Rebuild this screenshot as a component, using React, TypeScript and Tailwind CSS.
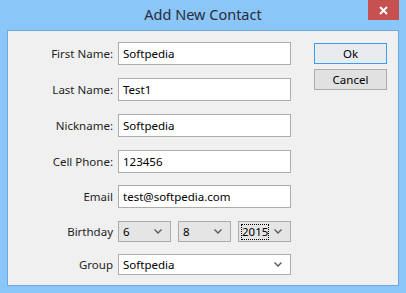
import React from "react";

const FONT = { fontFamily: '"Segoe UI", "Noto Sans", "Open Sans", sans-serif' };

function Chevron() {
  return (
    <svg width="8" height="5" viewBox="0 0 8 5" className="shrink-0">
      <path d="M0.5 0.5L4 4L7.5 0.5" fill="none" stroke="#5a5a5a" strokeWidth="1.4" />
    </svg>
  );
}

function Label({ text }: { text: string }) {
  return <div className="w-[110px] shrink-0 pr-[5px] text-right text-[11.5px] text-[#1e1e1e]">{text}</div>;
}

function TextBox({ value }: { value: string }) {
  return (
    <div className="w-[173px] h-[23px] shrink-0 border border-[#acacac] bg-white px-[4px] flex items-center text-[11.5px] text-black">
      {value}
    </div>
  );
}

function Combo({ value, width, white, focused }: { value: string; width: string; white?: boolean; focused?: boolean }) {
  return (
    <div
      className={`${width} h-[21px] shrink-0 border border-[#acacac] flex items-center justify-between pl-[2px] pr-[8px] text-[11.5px] text-black ${
        white ? "bg-white" : "bg-[#e5e5e5]"
      }`}
    >
      {focused ? (
        <span className="border border-dotted border-black leading-[14px]">{value}</span>
      ) : (
        <span className="pl-[2px]">{value}</span>
      )}
      <Chevron />
    </div>
  );
}

export default function App() {
  return (
    <div className="w-[406px] h-[293px] bg-[#8ac6f7] flex flex-col" style={FONT}>
      {/* Title bar */}
      <div className="h-[30px] grid grid-cols-[1fr_auto_1fr] items-start">
        <div />
        <div className="pt-[4px] text-[14.5px] text-[#2b2b3a]">Add New Contact</div>
        <div className="flex justify-end pr-[7px]">
          <div className="w-[31px] h-[20px] bg-[#c75050] flex items-center justify-center">
            <svg width="9" height="9" viewBox="0 0 9 9">
              <path d="M1 1L8 8M8 1L1 8" stroke="white" strokeWidth="2" />
            </svg>
          </div>
        </div>
      </div>

      {/* Client area */}
      <div className="mx-[7px] h-[256px] border border-[#6fa8dc] bg-[#f0f0f0] flex">
        <div className="flex flex-col pt-[11px]">
          <div className="flex items-center h-[23px]">
            <Label text="First Name:" />
            <TextBox value="Softpedia" />
          </div>
          <div className="flex items-center h-[23px] mt-[13px]">
            <Label text="Last Name:" />
            <TextBox value="Test1" />
          </div>
          <div className="flex items-center h-[23px] mt-[13px]">
            <Label text="Nickname:" />
            <TextBox value="Softpedia" />
          </div>
          <div className="flex items-center h-[23px] mt-[13px]">
            <Label text="Cell Phone:" />
            <TextBox value="123456" />
          </div>
          <div className="flex items-center h-[23px] mt-[12px]">
            <Label text="Email" />
            <TextBox value="test@softpedia.com" />
          </div>
          <div className="flex items-center h-[21px] mt-[13px]">
            <Label text="Birthday" />
            <div className="flex gap-[7px]">
              <Combo value="6" width="w-[53px]" />
              <Combo value="8" width="w-[53px]" />
              <Combo value="2015" width="w-[53px]" focused />
            </div>
          </div>
          <div className="flex items-center h-[21px] mt-[12px]">
            <Label text="Group" />
            <Combo value="Softpedia" width="w-[173px]" white />
          </div>
        </div>

        <div className="flex flex-col ml-[23px] pt-[12px]">
          <div className="w-[73px] h-[21px] border border-[#3c9cf0] bg-[#e8ecf0] flex items-center justify-center text-[11.5px] text-black">
            Ok
          </div>
          <div className="w-[73px] h-[21px] mt-[5px] border border-[#acacac] bg-[#e1e1e1] flex items-center justify-center text-[11.5px] text-black">
            Cancel
          </div>
        </div>
      </div>
    </div>
  );
}
